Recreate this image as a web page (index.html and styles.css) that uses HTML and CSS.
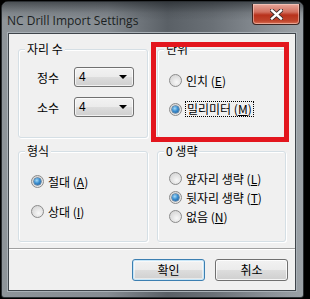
FILE: index.html
```html
<!DOCTYPE html>
<html>
<head>
<meta charset="utf-8">
<link rel="stylesheet" href="styles.css">
</head>
<body>
<div class="window">
  <div class="titlebar">
    <span class="title">NC Drill Import Settings</span>
    <div class="close">
      <svg width="13" height="11" viewBox="0 0 13 11">
        <path d="M2 1.5 L11 9.5 M11 1.5 L2 9.5" stroke="#3a2a28" stroke-width="4.2" stroke-linecap="square"/>
        <path d="M2 1.5 L11 9.5 M11 1.5 L2 9.5" stroke="#ffffff" stroke-width="2.4" stroke-linecap="square"/>
      </svg>
    </div>
  </div>
  <div class="client">
    <div class="groups">
      <div class="group g-digits">
        <span class="legend">자리 수</span>
        <div class="field">
          <span class="flabel">정수</span>
          <div class="combo"><span>4</span><i class="arrow"></i></div>
        </div>
        <div class="field">
          <span class="flabel">소수</span>
          <div class="combo"><span>4</span><i class="arrow"></i></div>
        </div>
      </div>
      <div class="group g-unit">
        <span class="legend">단위</span>
        <div class="radio"><i class="dot"></i><span>인치 (<u>E</u>)</span></div>
        <div class="radio"><i class="dot on"></i><span class="focus">밀리미터 (<u>M</u>)</span></div>
      </div>
      <div class="group g-format">
        <span class="legend">형식</span>
        <div class="radio"><i class="dot on"></i><span>절대 (<u>A</u>)</span></div>
        <div class="radio"><i class="dot"></i><span>상대 (<u>I</u>)</span></div>
      </div>
      <div class="group g-zero">
        <span class="legend">0 생략</span>
        <div class="radio"><i class="dot"></i><span>앞자리 생략 (<u>L</u>)</span></div>
        <div class="radio"><i class="dot on"></i><span>뒷자리 생략 (<u>T</u>)</span></div>
        <div class="radio"><i class="dot"></i><span>없음 (<u>N</u>)</span></div>
      </div>
    </div>
    <div class="sep"></div>
    <div class="buttons">
      <div class="btn default">확인</div>
      <div class="btn">취소</div>
    </div>
  </div>
  <div class="annot"></div>
</div>
</body>
</html>
```

FILE: styles.css
```css
html, body {
  margin: 0;
  padding: 0;
  background: #000;
  width: 310px;
  height: 299px;
  overflow: hidden;
}
body {
  font-family: "Noto Sans CJK KR", "Noto Sans", sans-serif;
  font-size: 12px;
  color: #000;
}
.window {
  position: relative;
  width: 301px;
  height: 295px;
  margin: 1px 0 0 1px;
  border: 1px solid #2b2f33;
  border-radius: 7px 7px 3px 3px;
  background: linear-gradient(90deg, #8e9499 0%, #868c92 35%, #5a6066 55%, #6a7076 70%, #8a9096 88%, #9ca2a7 100%);
  display: flex;
  flex-direction: column;
}
.titlebar {
  position: relative;
  height: 31px;
  display: flex;
  align-items: center;
  padding-left: 5px;
  background: linear-gradient(180deg, rgba(20,24,28,0.55) 0%, rgba(40,44,48,0.15) 35%, rgba(0,0,0,0) 60%);
  border-radius: 6px 6px 0 0;
}
.title {
  font-family: "Open Sans", "Noto Sans", sans-serif;
  font-size: 12px;
  color: #1b1f22;
  margin-top: 6px;
}
.close {
  position: absolute;
  right: 3px;
  top: 2px;
  width: 46px;
  height: 20px;
  border: 1px solid #3d2420;
  border-top: none;
  border-radius: 0 0 4px 4px;
  background: linear-gradient(180deg, #e8a89c 0%, #d2705f 40%, #b8321c 55%, #c0452c 85%, #d8745a 100%);
  display: flex;
  align-items: center;
  justify-content: center;
  box-shadow: inset 0 0 0 1px rgba(255,220,210,0.5);
}
.client {
  margin: 0 7px 0 6px;
  height: 256px;
  background: #f0f0f0;
  border: 1px solid #3f454b;
  box-shadow: 0 0 0 1px #a9b0b6;
  display: flex;
  flex-direction: column;
}
.groups {
  display: grid;
  grid-template-columns: 130px 129px;
  grid-template-rows: 89px 91px;
  column-gap: 9px;
  row-gap: 13px;
  padding: 15px 0 0 9px;
}
.group {
  position: relative;
  border: 1px solid #d5dfe5;
  border-radius: 3px;
  box-shadow: inset 1px 1px 0 #fff, 1px 1px 0 #fff;
  display: flex;
  flex-direction: column;
}
.legend {
  position: absolute;
  left: 6px;
  top: -10px;
  padding: 0 2px;
  background: #f0f0f0;
  line-height: 18px;
}
.g-digits {
  padding-top: 17px;
  gap: 10px;
}
.field {
  display: flex;
  align-items: center;
  height: 20px;
}
.flabel {
  width: 40px;
  text-align: right;
  margin-right: 15px;
}
.combo {
  height: 18px;
  border: 1px solid #707070;
  border-radius: 3px;
  background: linear-gradient(180deg, #f2f2f2 0%, #ebebeb 50%, #dddddd 51%, #cfcfcf 100%);
  box-shadow: inset 0 0 0 1px rgba(255,255,255,0.7);
  display: flex;
  align-items: center;
  justify-content: space-between;
  padding: 0 6px 0 4px;
  box-sizing: content-box;
  width: 48px;
  font-family: "Liberation Sans", sans-serif;
  font-size: 12px;
}
.arrow {
  width: 0;
  height: 0;
  border-left: 4px solid transparent;
  border-right: 4px solid transparent;
  border-top: 4px solid #000;
}
.radio {
  display: flex;
  align-items: center;
  height: 16px;
  white-space: nowrap;
}
.radio u {
  text-decoration-thickness: 1px;
  text-underline-offset: 1px;
}
.dot {
  position: relative;
  width: 11px;
  height: 11px;
  border: 1px solid #8b8b8b;
  border-radius: 50%;
  background: radial-gradient(circle at 60% 65%, #f8f8f8 0%, #e4e4e4 45%, #cfcfcf 100%);
  margin-right: 4px;
  flex: none;
  box-sizing: content-box;
}
.dot.on::after {
  content: "";
  position: absolute;
  left: 2px;
  top: 2px;
  width: 7px;
  height: 7px;
  border-radius: 50%;
  background: radial-gradient(circle at 40% 35%, #a7dcf8 0%, #3b8fd1 45%, #18508a 100%);
  box-shadow: 0 0 0 0.5px #1d4a73;
}
.g-unit { padding: 22px 0 0 11px; gap: 13px; }
.g-format { padding: 21px 0 0 12px; gap: 14px; }
.g-zero { padding: 18px 0 0 11px; gap: 3px; }
.focus {
  outline: 1px dotted #000;
  outline-offset: 0px;
  padding: 0 1px;
  line-height: 14px;
}
.sep {
  margin-top: 6px;
  height: 0;
  border-top: 1px solid #a0a0a0;
  border-bottom: 1px solid #ffffff;
}
.buttons {
  display: flex;
  justify-content: flex-end;
  gap: 10px;
  padding: 9px 7px 0 0;
}
.btn {
  width: 71px;
  height: 20px;
  border: 1px solid #707070;
  border-radius: 3px;
  background: linear-gradient(180deg, #f2f2f2 0%, #ebebeb 50%, #dddddd 51%, #cfcfcf 100%);
  box-shadow: inset 0 0 0 1px rgba(255,255,255,0.8);
  display: flex;
  align-items: center;
  justify-content: center;
  line-height: 1;
}
.btn.default {
  border-color: #3c7fb1;
  box-shadow: inset 0 0 0 1px #c7e6f8, inset 0 0 0 2px rgba(255,255,255,0.5);
}
.annot {
  position: absolute;
  left: 149px;
  top: 40px;
  width: 128px;
  height: 90px;
  border: 5px solid #e3161e;
}
```
